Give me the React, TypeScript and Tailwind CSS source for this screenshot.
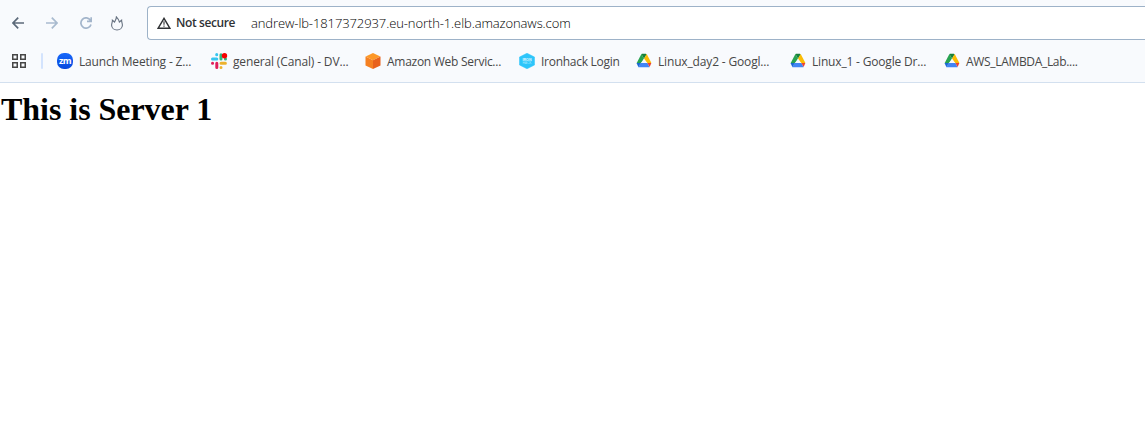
import type { ReactNode } from "react";

function BackIcon() {
  return (
    <svg width="12" height="12" viewBox="0 0 12 12" fill="none" stroke="#5c6a7a" strokeWidth="1.7">
      <path d="M12 6H1.2M6.2 .7 1 6l5.200 5.300" />
    </svg>
  );
}

function ForwardIcon() {
  return (
    <svg width="12" height="12" viewBox="0 0 12 12" fill="none" stroke="#a9bbcf" strokeWidth="1.7">
      <path d="M0 6h10.800M5.800 .7 11 6l-5.200 5.300" />
    </svg>
  );
}

function ReloadIcon() {
  return (
    <svg width="12" height="12" viewBox="0 0 12 12" fill="none" stroke="#a3b5cb" strokeWidth="1.7">
      <path d="M10.500 3.400A5.150 5.150 0 1 0 11 7.400M11.200 .2v4.100H7" />
    </svg>
  );
}

function FlameIcon() {
  return (
    <svg width="12" height="15" viewBox="0 0 12 15" fill="none" stroke="#667180" strokeWidth="1.100" strokeLinejoin="miter">
      <path d="M5.400 .9C5.300 3 4.400 4.200 3.600 6L1.400 4.200C1.500 6.200.6 7.300.6 9.200c.1 2.900 2.500 4.800 5.400 4.800s5.300-1.900 5.400-4.800c0-1.900-.8-3-.8-5L8.400 6C7.900 4 6.700 2.300 5.400.9Z" />
    </svg>
  );
}

function WarningIcon() {
  return (
    <svg width="14" height="12" viewBox="0 0 14 12" fill="none" stroke="#303235" strokeWidth="1.4">
      <path d="M7 1.300 1.200 11.200h11.600Z" />
      <path d="M7 4.200v3.600M7 8.500v1.300" strokeWidth="1.1" />
    </svg>
  );
}

function AppsIcon() {
  return (
    <svg width="14" height="14" viewBox="0 0 14 14" fill="none" stroke="#474747" strokeWidth="1.5">
      <path d="M.75.75h4.500v4.500H.75zM8.750.75h4.500v4.500h-4.500zM.75 8.750h4.500v4.500H.75zM8.750 8.750h4.500v4.500h-4.500z" />
    </svg>
  );
}

function ZoomLogo() {
  return (
    <span className="flex h-4 w-4 items-center justify-center rounded-[7px] bg-linear-to-b from-[#1767fa] to-[#0648dd] pb-[2px] font-['Open_Sans',sans-serif] text-[9px] leading-none font-bold tracking-[-0.5px] text-white">
      zm
    </span>
  );
}

function SlackLogo() {
  return (
    <svg width="17" height="16" viewBox="0 0 17 16" strokeWidth="3" strokeLinecap="round" fill="none">
      <path d="M1.500 6h4.300M5.700 1.600v.1" stroke="#36c5f0" />
      <path d="M10 1.700V6M14.400 6h.1" stroke="#2eb67d" />
      <path d="M10 10.200h4.400M10 14.400v.1" stroke="#ecb22e" />
      <path d="M5.800 10.200v4.300M1.500 10.200h.1" stroke="#e01e5a" />
      <circle cx="13.500" cy="2.700" r="2.700" fill="#f50000" />
    </svg>
  );
}

function CubeLogo() {
  return (
    <svg width="16" height="16" viewBox="0 0 16 16">
      <path d="M8 0 15.300 3.600 8 7.200.7 3.600Z" fill="#fd9827" />
      <path d="M.5 3.600 8 7.200V16L.5 12.400Z" fill="#f58021" />
      <path d="M15.500 3.600 8 7.200V16l7.500-3.600Z" fill="#e8611c" />
    </svg>
  );
}

function IronhackLogo() {
  return (
    <svg width="16" height="16" viewBox="0 0 16 16">
      <path d="M8 .2 15.500 4v8L8 15.800.5 12V4Z" fill="#2dc5fa" stroke="#2dc5fa" strokeWidth=".5" strokeLinejoin="round" />
      <text x="8" y="7.800" textAnchor="middle" fill="#e0f8ff" fontFamily="Liberation Sans" fontWeight="700" fontSize="3.600">IRON</text>
      <text x="8" y="11" textAnchor="middle" fill="#a7e9ff" fontFamily="Liberation Sans" fontSize="3.200">HACK</text>
    </svg>
  );
}

function DriveLogo() {
  return (
    <svg width="16" height="16" viewBox="0 0 16 16">
      <path d="M5.300 1Q5.800.8 6.300.8h3.500Q10.500.8 10.700 1.200L8 5.700Z" fill="#188038" />
      <path d="M10.700 1.100 15.400 10h-4L8 5.700Z" fill="#fbbc04" />
      <path d="M5.400 1.100 8 5.700 4.700 10.200H.6Z" fill="#27a350" />
      <path d="M4.500 10h7L13.600 14.300H2.400Z" fill="#4285f4" />
      <path d="M.6 10h4.100L2.400 14.200Z" fill="#1967d2" />
      <path d="M11.400 10h4l-1.800 4.100Z" fill="#ea4335" />
      <path d="M8 5.700 10.600 10H5.400Z" fill="#f8fafd" />
    </svg>
  );
}

function Bookmark({ icon, label, width, tracking }: { icon: ReactNode; label: string; width: string; tracking: string }) {
  return (
    <div className={`flex h-5 shrink-0 items-center ${width}`}>
      <span className="flex w-[22px] shrink-0">{icon}</span>
      <span className={`pt-[2px] whitespace-nowrap ${tracking}`}>{label}</span>
    </div>
  );
}

export default function App() {
  return (
    <div className="min-h-[433px] w-full overflow-hidden bg-white">
      <header className="h-[83px] border-b border-[#d3e0ef] bg-[#f8fafd] font-['Open_Sans','Noto_Sans',sans-serif]">
        <div className="flex h-10 pt-[6px]">
          <nav className="flex h-[34px] w-[147px] shrink-0 items-center pl-3">
            <span className="w-[34px]"><BackIcon /></span>
            <span className="w-[34px]"><ForwardIcon /></span>
            <span className="w-[31px]"><ReloadIcon /></span>
            <FlameIcon />
          </nav>
          <div className="flex h-[34px] flex-1 items-center rounded-l-[4px] border border-r-0 border-[#9db2c8] bg-white pl-[9px]">
            <WarningIcon />
            <span className="ml-[5px] w-[75px] text-[12px] font-semibold tracking-[-0.4px] whitespace-nowrap text-[#303235]">Not secure</span>
            <span className="pt-[2px] text-[13px] font-light tracking-[-0.1px] whitespace-nowrap text-black">andrew-lb-1817372937.eu-north-1.elb.amazonaws.com</span>
          </div>
        </div>
        <div className="flex h-[42px] items-center pl-3 text-[12px] text-[#474747]">
          <span className="w-[29px]"><AppsIcon /></span>
          <span className="mr-[14px] h-4 w-[2px] rounded bg-[#d3e3fd]" />
          <Bookmark icon={<ZoomLogo />} label="Launch Meeting - Z..." width="w-[154px]" tracking="tracking-[-0.17px]" />
          <Bookmark icon={<SlackLogo />} label="general (Canal) - DV..." width="w-[154px]" tracking="tracking-[-0.15px]" />
          <Bookmark icon={<CubeLogo />} label="Amazon Web Servic..." width="w-[154px]" tracking="tracking-[-0.27px]" />
          <Bookmark icon={<IronhackLogo />} label="Ironhack Login" width="w-[117px]" tracking="tracking-[-0.28px]" />
          <Bookmark icon={<DriveLogo />} label="Linux_day2 - Googl..." width="w-[154px]" tracking="tracking-[-0.16px]" />
          <Bookmark icon={<DriveLogo />} label="Linux_1 - Google Dr..." width="w-[154px]" tracking="tracking-[-0.18px]" />
          <Bookmark icon={<DriveLogo />} label="AWS_LAMBDA_Lab...." width="w-[154px]" tracking="tracking-[-0.32px]" />
        </div>
      </header>
      <main className="pt-[8px] pl-[1px]">
        <h1 className="font-['Liberation_Serif',serif] text-[32px] leading-[36px] font-bold tracking-[-0.04px] text-black">This is Server 1</h1>
      </main>
    </div>
  );
}
